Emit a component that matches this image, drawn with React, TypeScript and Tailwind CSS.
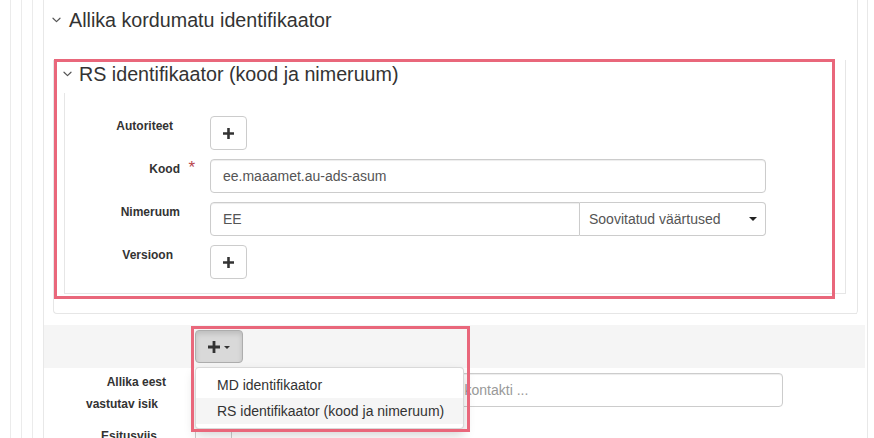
import React from "react";

function Chevron() {
  return (
    <svg width="9" height="6" viewBox="0 0 9 6" fill="none" className="shrink-0" aria-hidden>
      <path d="M1 1.2L4.5 4.6L8 1.2" stroke="#555" strokeWidth="1.2" strokeLinecap="round" strokeLinejoin="round" />
    </svg>
  );
}

function PlusIcon({ size = 11 }: { size?: number }) {
  return (
    <svg width={size} height={size} viewBox="0 0 12 12" aria-hidden>
      <path d="M4.6 0h2.8v4.6H12v2.8H7.4V12H4.6V7.4H0V4.6h4.6z" fill="#333" />
    </svg>
  );
}

function PlusButton() {
  return (
    <button
      type="button"
      className="flex h-[34px] w-[37px] items-center justify-center rounded-[4px] border border-[#ccc] bg-white"
    >
      <PlusIcon />
    </button>
  );
}

function TextInput({ value, className = "" }: { value: string; className?: string }) {
  return (
    <div
      className={
        "flex h-[34px] items-center border border-[#ccc] bg-white px-[12px] text-[14px] text-[#555] shadow-[inset_0_1px_1px_rgba(0,0,0,0.075)] " +
        className
      }
    >
      {value}
    </div>
  );
}

export default function App() {
  return (
    <div className="relative h-[438px] w-[874px] overflow-hidden bg-white font-['Liberation_Sans',Arial,sans-serif] text-[#333]">
      {/* nested editor containers */}
      <div className="ml-[10px] mr-[6px] h-full border-l border-[#ebebeb] pl-[10px]">
        <div className="h-full border-l border-[#ebebeb] pl-[10px]">
          <div className="h-full border-l border-[#ebebeb] pl-[10px]">
            <div className="h-full border-l border-r border-[#e8e8e8]">
              {/* Allika kordumatu identifikaator */}
              <div className="mx-[9px] mt-[15px] rounded-br-[4px] border-r border-[#e6e6e6]">
                <div className="-mt-[15px] pb-[3px] pt-[6px]">
                  <div className="-ml-[1px] flex h-[28px] items-center gap-[8px]">
                    <Chevron />
                    <span className="text-[19.7px] leading-[28px]">Allika kordumatu identifikaator</span>
                  </div>
                </div>
                <div className="rounded-bl-[4px] border-b border-l border-[#e6e6e6] pb-[19px] pl-[10px] pr-[11px]">
                  {/* RS identifikaator */}
                  <div className="mt-[35px] border-r border-[#e6e6e6]">
                    <div className="-mt-[12px] pb-[5px]">
                      <div className="-ml-[1px] flex h-[28px] items-center gap-[7px]">
                        <Chevron />
                        <span className="text-[19.7px] leading-[28px]">RS identifikaator (kood ja nimeruum)</span>
                      </div>
                    </div>
                    <div className="flex flex-col gap-[9px] border-b border-l border-[#e6e6e6] pb-[14px] pt-[23px]">
                      <div className="flex gap-[10px]">
                        <label className="w-[135px] shrink-0 pr-[27px] pt-[2px] text-right text-[12px] font-bold leading-[17px]">
                          Autoriteet
                        </label>
                        <PlusButton />
                      </div>
                      <div className="flex gap-[10px]">
                        <label className="relative w-[135px] shrink-0 pr-[20px] pt-[2px] text-right text-[12px] font-bold leading-[17px]">
                          Kood
                          <span className="absolute right-[5px] top-[0px] text-[17px] font-normal leading-[17px] text-[#b8474d]">*</span>
                        </label>
                        <TextInput value="ee.maaamet.au-ads-asum" className="w-[556px] rounded-[4px]" />
                      </div>
                      <div className="flex gap-[10px]">
                        <label className="w-[135px] shrink-0 pr-[20px] pt-[2px] text-right text-[12px] font-bold leading-[17px]">
                          Nimeruum
                        </label>
                        <div className="flex w-[556px]">
                          <TextInput value="EE" className="w-[370px] rounded-l-[4px]" />
                          <div className="flex h-[34px] w-[186px] items-center justify-between rounded-r-[4px] border border-l-0 border-[#ccc] bg-white pl-[9px] pr-[8px] text-[14px] text-[#555]">
                            <span>Soovitatud väärtused</span>
                            <svg width="8" height="4" viewBox="0 0 8 4" aria-hidden>
                              <path d="M0 0h8L4 4z" fill="#222" />
                            </svg>
                          </div>
                        </div>
                      </div>
                      <div className="flex gap-[10px]">
                        <label className="w-[135px] shrink-0 pr-[27px] pt-[2px] text-right text-[12px] font-bold leading-[17px]">
                          Versioon
                        </label>
                        <PlusButton />
                      </div>
                    </div>
                  </div>
                </div>
              </div>

              {/* add element bar */}
              <div className="mr-[2px] mt-[11px] h-[43px] bg-[#f5f5f5] pl-[151px] pt-[5px]">
                <div className="relative w-[48px]">
                  <button
                    type="button"
                    className="flex h-[33px] w-[48px] items-center justify-center gap-[4px] rounded-[4px] border border-[#adadad] bg-[#d9d9d9] shadow-[inset_0_3px_5px_rgba(0,0,0,0.125)]"
                  >
                    <PlusIcon size={12} />
                    <svg width="6" height="3" viewBox="0 0 6 3" className="mt-[2px]" aria-hidden>
                      <path d="M0 0h6L3 3z" fill="#333" />
                    </svg>
                  </button>
                  <div className="absolute left-0 top-[37px] z-10 w-[269px] whitespace-nowrap rounded-[4px] border border-[rgba(0,0,0,0.15)] bg-white py-[4px] text-[14px] leading-[20px] text-[#333] shadow-[0_6px_12px_rgba(0,0,0,0.175)]">
                    <div className="px-[21px] py-[3px]">MD identifikaator</div>
                    <div className="bg-[#f5f5f5] px-[21px] py-[3px]">RS identifikaator (kood ja nimeruum)</div>
                  </div>
                </div>
              </div>

              {/* Allika eest vastutav isik */}
              <div className="mt-[5px] flex h-[42px]">
                <div className="-mt-[2px] w-[151px] shrink-0 text-[12px] font-bold leading-[22px]">
                  <span className="block pr-[29px] text-right">Allika eest</span>
                  <span className="block pr-[37px] text-right">vastutav isik</span>
                </div>
                <div className="flex h-[34px] w-[588px] items-center whitespace-nowrap rounded-[4px] border border-[#ccc] bg-white px-[12px] text-[14px] text-[#999] shadow-[inset_0_1px_1px_rgba(0,0,0,0.075)]">
                  Vali kataloogist olemasolevad või sisesta kontakti ...
                </div>
              </div>

              {/* Esitusviis */}
              <div className="mt-[13px] flex">
                <label className="w-[151px] shrink-0 pr-[38px] text-right text-[12px] font-bold leading-[17px]">
                  Esitusviis
                </label>
                <PlusButton />
              </div>
            </div>
          </div>
        </div>
      </div>

      {/* annotation frames */}
      <div className="pointer-events-none absolute left-[54px] top-[59px] h-[240px] w-[781px] border-[3px] border-[#e9677b]" />
      <div className="pointer-events-none absolute left-[191px] top-[326px] z-20 h-[106px] w-[279px] border-[3px] border-[#e9677b]" />
    </div>
  );
}
